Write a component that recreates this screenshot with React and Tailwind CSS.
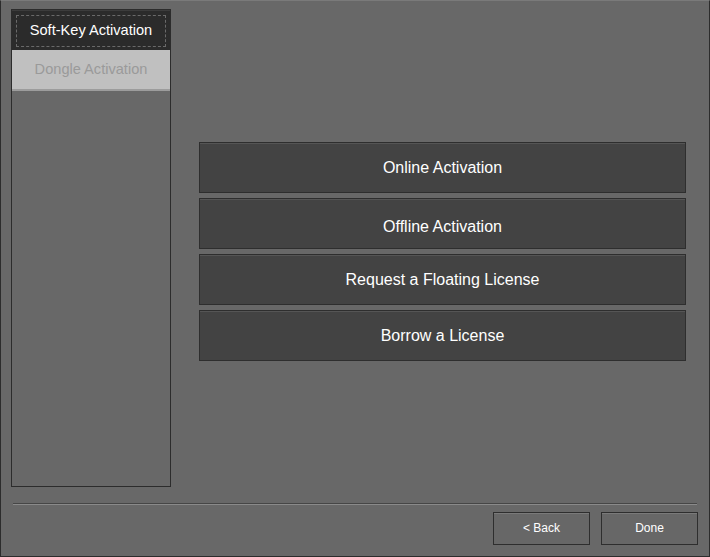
import React from 'react';

const actions = [
  { label: 'Online Activation', pad: '' },
  { label: 'Offline Activation', pad: 'pt-[6px]' },
  { label: 'Request a Floating License', pad: '' },
  { label: 'Borrow a License', pad: '' },
];

const App = () => {
  return (
    <div
      className="w-[710px] h-[557px] bg-[#686868] border-x border-b border-[#2c2c2c] border-t border-t-[#7a7a7a] flex flex-col"
      style={{ fontFamily: '"Liberation Sans", Arial, sans-serif' }}
    >
      {/* Body: tabs + actions */}
      <div className="flex pl-[10px] pt-[8px]">
        <div className="w-[160px] h-[478px] border border-[#2c2c2c] flex flex-col">
          <div className="h-[40px] bg-[#2b2b2b] border-t border-[#3c3c3c] pt-[4px] pb-[3px] px-[4px]">
            <div className="h-full border border-dashed border-[#6a6a6a] flex items-center justify-center text-[14.6px] text-white">
              Soft-Key Activation
            </div>
          </div>
          <div className="h-[41px] bg-[#c0c0c0] border-b-2 border-[#9c9c9c] flex items-center justify-center text-[14.6px] text-[#9a9a9a]">
            Dongle Activation
          </div>
        </div>

        {/* Actions */}
        <div className="ml-[28px] mt-[133px] w-[487px] flex flex-col gap-[5px]">
          {actions.map(({ label, pad }) => (
            <button
              key={label}
              className={`h-[51px] bg-[#434343] border border-[#2e2e2e] shadow-[inset_0_1px_0_#555] text-white text-[16px] flex items-center justify-center ${pad}`}
            >
              {label}
            </button>
          ))}
        </div>
      </div>

      {/* Footer */}
      <div className="mt-auto pb-[11px]">
        <div className="mx-[12px] h-[2px] border-t border-[#464646] bg-[#8a8a8a]" />
        <div className="flex justify-end gap-[11px] pr-[11px] mt-[7px]">
          <button className="w-[97px] h-[33px] pb-[2px] bg-[#676767] border border-[#2e2e2e] shadow-[inset_0_1px_0_#7a7a7a] text-white text-[12px]">
            &lt; Back
          </button>
          <button className="w-[97px] h-[33px] pb-[2px] bg-[#676767] border border-[#2e2e2e] shadow-[inset_0_1px_0_#7a7a7a] text-white text-[12px]">
            Done
          </button>
        </div>
      </div>
    </div>
  );
};

export default App;
